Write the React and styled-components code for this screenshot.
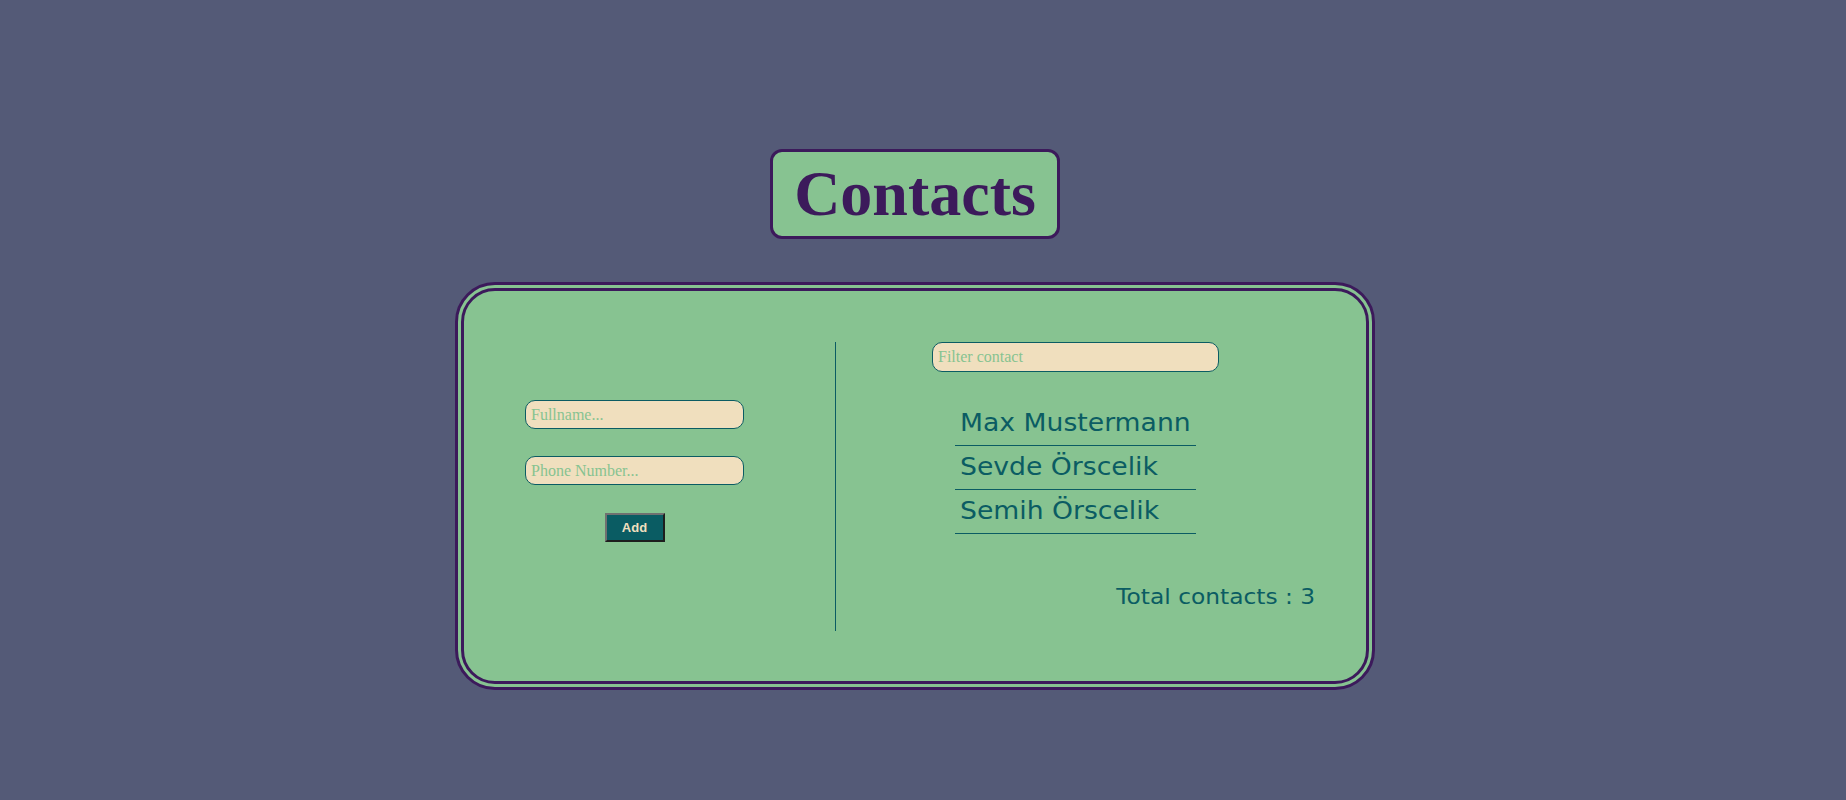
import React, { useState } from "react";
import styled, { createGlobalStyle } from "styled-components";

const Global = createGlobalStyle`
  html, body { margin: 0; padding: 0; background: #545a77; }
  body { font-family: "Liberation Serif", serif; }
`;

const Page = styled.div`
  width: 1830px;
  display: flex;
  flex-direction: column;
  align-items: center;
  padding-top: 149px;
`;

const TitleBox = styled.h1`
  margin: 0;
  height: 84px;
  box-sizing: content-box;
  padding: 0 21px;
  display: flex;
  align-items: center;
  background: #87c391;
  border: 3px solid #3c1a5b;
  border-radius: 12px;
  color: #3c1a5b;
  font-family: "Liberation Serif", serif;
  font-weight: 700;
  font-size: 64px;
  line-height: 1;
`;

const Card = styled.div`
  margin-top: 43px;
  width: 902px;
  box-sizing: content-box;
  border: 9px double #3c1a5b;
  border-radius: 40px;
  background: #87c391;
  padding: 51px 0 50px;
  display: flex;
`;

const LeftCol = styled.form`
  width: 310px;
  padding: 58px 0 0 61px;
  display: flex;
  flex-direction: column;
  align-items: flex-start;
`;

const FormStack = styled.div`
  width: 219px;
  display: flex;
  flex-direction: column;
  align-items: center;
  gap: 27px;
`;

const Input = styled.input`
  box-sizing: border-box;
  width: ${(p) => p.$w || 219}px;
  height: ${(p) => p.$h || 29}px;
  border: 1px solid #0b5c63;
  border-radius: 10px;
  background: #f0dfbe;
  padding: 0 5px;
  font-family: "Liberation Serif", serif;
  font-size: 16px;
  color: #0b5c63;
  outline: none;
  &::placeholder { color: #87c391; opacity: 1; }
`;

const AddButton = styled.button`
  margin-top: 1px;
  width: 60px;
  height: 29px;
  background: #0a5c63;
  color: #f0dfbe;
  font-family: "Liberation Sans", Arial, sans-serif;
  font-weight: 700;
  font-size: 13px;
  border-style: solid;
  border-width: 2px;
  border-color: #707070 #1e1e1e #1e1e1e #707070;
  padding: 0;
  cursor: pointer;
`;

const Divider = styled.div`
  width: 1px;
  height: 289px;
  background: #0b5c63;
`;

const RightCol = styled.div`
  flex: 1;
  padding: 0 51px 0 96px;
  display: flex;
  flex-direction: column;
`;

const FilterBlock = styled.div`
  width: 287px;
  display: flex;
  flex-direction: column;
  align-items: center;
`;

const List = styled.ul`
  list-style: none;
  margin: 30px 0 0;
  padding: 0;
  width: 241px;
`;

const Item = styled.li`
  box-sizing: border-box;
  height: 44px;
  padding: 7px 5px 0;
  border-bottom: 1px solid #0b5c63;
  font-family: "DejaVu Sans", Verdana, sans-serif;
  font-size: 24px;
  line-height: 28px;
  color: #0b5c63;
  white-space: nowrap;
`;

const Wide = styled.span`
  display: inline-block;
  transform: scaleX(1.11);
  transform-origin: ${(p) => (p.$right ? "right" : "left")} center;
`;

const Total = styled.p`
  margin: 51px 0 0;
  text-align: right;
  font-family: "DejaVu Sans", Verdana, sans-serif;
  font-size: 21px;
  line-height: 24px;
  color: #0b5c63;
  white-space: nowrap;
`;

export default function App() {
  const [contacts] = useState([
    "Max Mustermann",
    "Sevde Örscelik",
    "Semih Örscelik",
  ]);
  const [filter, setFilter] = useState("");
  const shown = contacts.filter((c) =>
    c.toLowerCase().includes(filter.toLowerCase())
  );
  return (
    <>
      <Global />
      <Page>
        <TitleBox>Contacts</TitleBox>
        <Card>
          <LeftCol onSubmit={(e) => e.preventDefault()}>
            <FormStack>
              <Input placeholder="Fullname..." />
              <Input placeholder="Phone Number..." />
              <AddButton type="submit">Add</AddButton>
            </FormStack>
          </LeftCol>
          <Divider />
          <RightCol>
            <FilterBlock>
              <Input
                $w={287}
                $h={30}
                placeholder="Filter contact"
                value={filter}
                onChange={(e) => setFilter(e.target.value)}
              />
              <List>
                {shown.map((c) => (
                  <Item key={c}>
                    <Wide>{c}</Wide>
                  </Item>
                ))}
              </List>
            </FilterBlock>
            <Total>
              <Wide $right>Total contacts : {contacts.length}</Wide>
            </Total>
          </RightCol>
        </Card>
      </Page>
    </>
  );
}
